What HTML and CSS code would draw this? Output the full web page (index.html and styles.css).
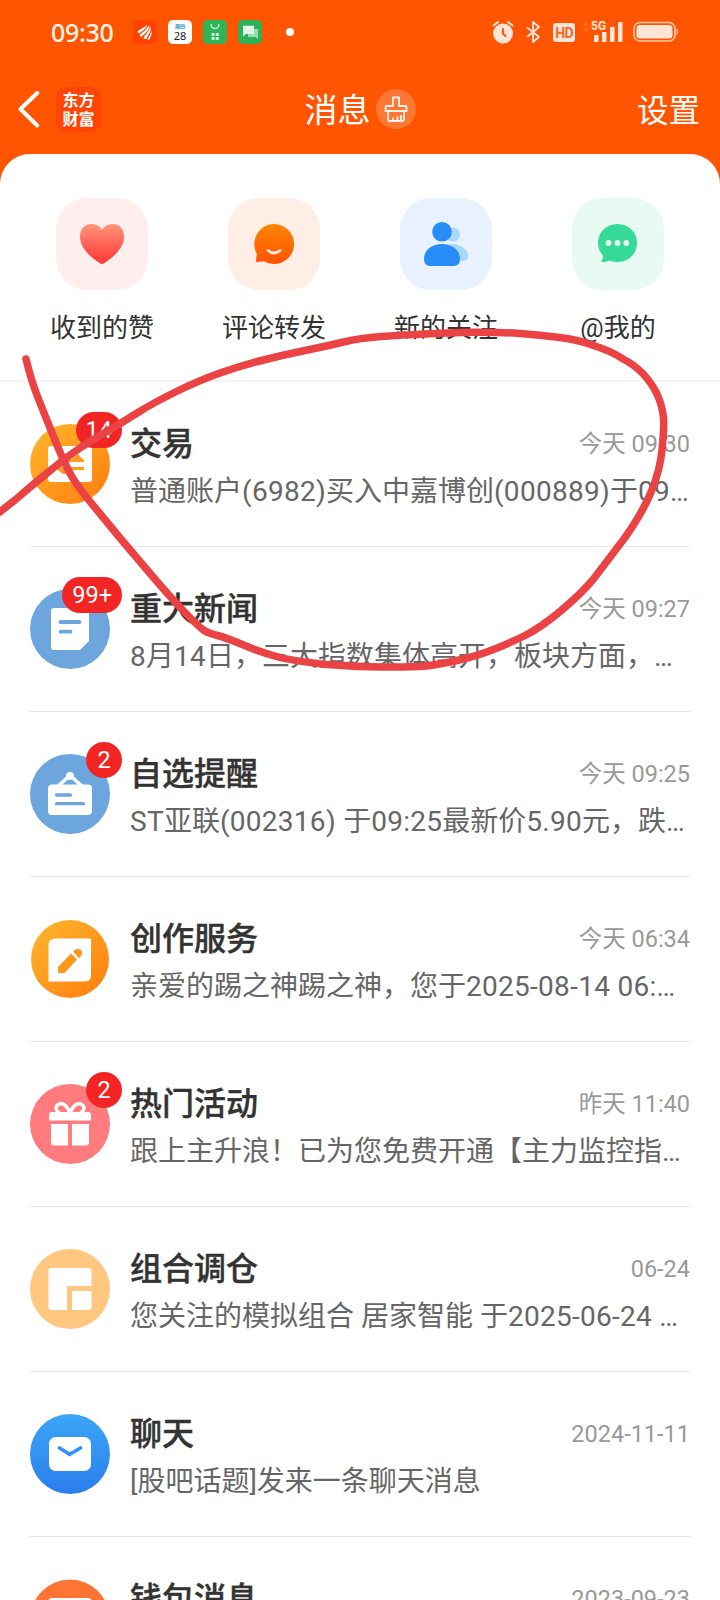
FILE: index.html
```html
<!DOCTYPE html>
<html lang="zh-CN">
<head>
<meta charset="utf-8">
<title>消息</title>
<link rel="stylesheet" href="styles.css">
</head>
<body>
<div class="screen">
  <header class="header">
    <div class="status">
      <span class="clock">09:30</span>
      <div class="status-apps">
        <svg class="app" viewBox="0 0 24 24"><rect width="24" height="24" rx="5" fill="#ff4200"/><path d="M4.500 12C7 8 11.500 8.500 14 4.500C14 9 9.500 10.500 6 13.500ZM6.500 15.500C9 11.500 14 11 15.500 5C17.500 10.500 11.500 13 8.500 17ZM10.500 18.500C11 14.500 16.500 13 16.800 6C19.500 12 14.500 14 13.500 19ZM14.800 20C14.500 17 18 15.500 18.200 10.500C20 14.500 17 16.500 16.800 19Z" fill="#fff"/></svg>
        <span class="app app-calendar"><small>周四</small><b>28</b></span>
        <svg class="app" viewBox="0 0 24 24"><rect width="24" height="24" rx="5" fill="#2db558"/><path d="M8 4c0 6 8 6 8 0" fill="none" stroke="#d9f7de" stroke-width="1.300"/><g fill="#c8efcf"><rect x="8.500" y="13" width="3.200" height="3" rx=".8"/><rect x="12.700" y="13" width="3.200" height="3" rx=".8"/><rect x="8.500" y="17" width="3.200" height="3" rx=".8"/><rect x="12.700" y="17" width="3.200" height="3" rx=".8"/></g></svg>
        <svg class="app" viewBox="0 0 24 24"><rect width="24" height="24" rx="5" fill="#2eb257"/><path d="M10 9h10v10l-2.500-2H10z" fill="#9bddb0"/><path d="M5 5.800h11V14H8l-3 2.500z" fill="#e2f6e7"/></svg>
      </div>
      <i class="status-dot"></i>
      <div class="status-right">
        <svg width="22" height="24" viewBox="0 0 22 24"><circle cx="11" cy="13.500" r="10" fill="#ffe4d8"/><path d="M1.500 5.500 6 2M20.500 5.500 16 2" stroke="#ffe4d8" stroke-width="2" stroke-linecap="round"/><path d="M11 9v5l2.500 2" fill="none" stroke="#ff5a08" stroke-width="2.200" stroke-linecap="round"/></svg>
        <svg width="16" height="24" viewBox="0 0 16 24"><path d="M2 7.500 14 17l-6 5V2l6 5L2 17" fill="none" stroke="#ffe4d8" stroke-width="1.900" stroke-linejoin="round"/></svg>
        <span class="hd">HD</span>
        <span class="signal">
          <svg width="40" height="24" viewBox="0 0 40 24"><path d="M0 5.500 3 2l3 3.500zM0 8.500 3 12l3-3.500z" fill="#ff7430"/><path d="M11 15h4.500v7H11zM19 12h4.500v10H19zM27 7h4.500v15H27zM35 2h4.500v20H35z" fill="#ffe4d8"/></svg>
          <em>5G</em>
        </span>
        <svg width="46" height="22" viewBox="0 0 46 22"><rect x="1" y="1.500" width="41" height="18.500" rx="6" fill="none" stroke="#ffc9ae" stroke-width="1.600"/><rect x="3.500" y="4" width="36" height="13.500" rx="3.500" fill="#ffe4d8"/><path d="M43.500 7.500c2 .5 2 6 0 6.500z" fill="#ffc9ae"/></svg>
      </div>
    </div>
    <nav class="nav">
      <div class="nav-left">
        <svg class="back" width="22" height="38" viewBox="0 0 22 38"><path d="M19.200 3 2.500 19l16.700 16.500" fill="none" stroke="#fff" stroke-width="4" stroke-linecap="round" stroke-linejoin="round"/></svg>
        <span class="brand"><span>东方</span><span>财富</span></span>
      </div>
      <div class="nav-title"><span>消息</span>
        <svg width="40" height="40" viewBox="0 0 40 40"><circle cx="20" cy="20" r="20" fill="#ff7733"/><g fill="none" stroke="#fff4ec" stroke-width="1.800" stroke-linejoin="round"><path d="M17 8.500h6V17h6.500q1 0 1 1v4h-21v-4q0-1 1-1H17z"/><path d="M12 22.500V30q0 2 2 2h12q2 0 2-2v-7.500M17 32v-3.500M21.500 32v-5M25 32v-6"/></g></svg>
      </div>
      <span class="nav-action">设置</span>
    </nav>
  </header>

  <main class="sheet">
    <section class="shortcuts">
      <div class="shortcut">
        <div class="tile tile-pink"><svg width="92" height="92" viewBox="0 0 92 92"><defs><linearGradient id="g1" x2="0" y2="1"><stop stop-color="#ff9677"/><stop offset=".85" stop-color="#ff413f"/></linearGradient></defs><path d="M46 32C42 23.500 24 22.500 24 39C24 50 34 58.500 43.500 65Q46 67 48.500 65C58 58.500 68 50 68 39C68 22.500 50 23.500 46 32Z" fill="url(#g1)"/></svg></div>
        <span>收到的赞</span>
      </div>
      <div class="shortcut">
        <div class="tile tile-peach"><svg width="92" height="92" viewBox="0 0 92 92"><defs><linearGradient id="g2" x2="0" y2="1"><stop stop-color="#ff8500"/><stop offset="1" stop-color="#ff5200"/></linearGradient></defs><path d="M46 26a20 20 0 1 1-10 37.300L29.500 64q-2 0-1.500-2l1-6A20 20 0 0 1 46 26Z" fill="url(#g2)"/><path d="M40 52.500q6 5 12 0" fill="none" stroke="#ffe9dd" stroke-width="2.800" stroke-linecap="round"/></svg></div>
        <span>评论转发</span>
      </div>
      <div class="shortcut">
        <div class="tile tile-blue"><svg width="92" height="92" viewBox="0 0 92 92"><g fill="#a9d7ff"><circle cx="53" cy="36.500" r="7"/><path d="M50 46c10-1 18 5 18 12q0 5-6 5H50z"/></g><path d="M24 61c0-20 36-20 36 0q0 7-6 7H30q-6 0-6-7Z" fill="#288df9"/><circle cx="42" cy="33.700" r="9.800" fill="#288df9"/></svg></div>
        <span>新的关注</span>
      </div>
      <div class="shortcut">
        <div class="tile tile-mint"><svg width="92" height="92" viewBox="0 0 92 92"><path d="M45.500 26C57 26 65 34.500 65 45S57 64 45.500 64q-4.500 0-8-1.500Q34 64 30 64q-1.500-.5 0-2 1.500-2 .5-5Q26 52 26 45C26 34.500 34 26 45.500 26Z" fill="#36da98"/><g fill="#eafbf3"><circle cx="36.500" cy="45" r="2.900"/><circle cx="45.500" cy="45" r="2.900"/><circle cx="54.300" cy="45" r="2.900"/></g></svg></div>
        <span>@我的</span>
      </div>
    </section>

    <section class="list">
      <article class="row">
        <div class="avatar"><svg width="80" height="80" viewBox="0 0 80 80"><defs><linearGradient id="g3" x1=".1" y1=".1" x2=".9" y2=".9"><stop stop-color="#ffb22a"/><stop offset="1" stop-color="#ff8210"/></linearGradient></defs><circle cx="40" cy="40" r="40" fill="url(#g3)"/><rect x="18" y="22" width="44" height="36" rx="3" fill="#fff"/><path d="M27 35.500h14L47.500 30 54 36v2H27ZM54 43H26v1.500L33 50h7v-4h14Z" fill="#ff9a1c"/></svg><b class="badge">14</b></div>
        <div class="body"><div class="top"><h2>交易</h2><time>今天 09:30</time></div><p>普通账户<i>(6982)</i>买入中嘉博创<i>(000889)</i>于<i>09</i>…</p></div>
      </article>
      <article class="row">
        <div class="avatar"><svg width="80" height="80" viewBox="0 0 80 80"><circle cx="40" cy="40" r="40" fill="#6ca6dd"/><path d="M24 19h32q3 0 3 3v30l-9 9H24q-3 0-3-3V22q0-3 3-3Z" fill="#fff"/><path d="M30.500 33h19M30.500 42.700h10" stroke="#6ca6dd" stroke-width="3.800" stroke-linecap="round"/></svg><b class="badge">99+</b></div>
        <div class="body"><div class="top"><h2>重大新闻</h2><time>今天 09:27</time></div><p><i>8</i>月<i>14</i>日，三大指数集体高开，板块方面，…</p></div>
      </article>
      <article class="row">
        <div class="avatar"><svg width="80" height="80" viewBox="0 0 80 80"><circle cx="40" cy="40" r="40" fill="#6ca6dd"/><path d="M28 32 40 21.500 52 32" fill="none" stroke="#fff" stroke-width="3.600"/><circle cx="40" cy="22" r="4" fill="#fff"/><rect x="18" y="30.500" width="44" height="30.500" rx="4" fill="#fff"/><path d="M26.500 41h14M26.500 49.700h27" stroke="#6ca6dd" stroke-width="3.300" stroke-linecap="round"/></svg><b class="badge">2</b></div>
        <div class="body"><div class="top"><h2>自选提醒</h2><time>今天 09:25</time></div><p><i>ST</i>亚联<i>(002316) </i>于<i>09:25</i>最新价<i>5.90</i>元，跌…</p></div>
      </article>
      <article class="row">
        <div class="avatar"><svg width="80" height="80" viewBox="0 0 80 80"><circle cx="40" cy="40" r="39" fill="url(#g3)"/><path d="M25 19.500h36V56q0 6.500-6 6.500H18.500V26q0-6.500 6.500-6.500Z" fill="#fff"/><path d="M28 48 41 34.500l6 6L34.500 54H28Z" fill="#ff971b"/><path d="M43 32.500q5-5 8.500-.8 2 3.300-2.500 7.500Z" fill="#ff971b"/></svg></div>
        <div class="body"><div class="top"><h2>创作服务</h2><time>今天 06:34</time></div><p>亲爱的踢之神踢之神，您于<i>2025-08-14 06:</i>…</p></div>
      </article>
      <article class="row">
        <div class="avatar"><svg width="80" height="80" viewBox="0 0 80 80"><circle cx="40" cy="40" r="40" fill="#ff7b7d"/><path d="M39.500 29C37 20 31 18 27.500 21c-3 3-1 6 2 8M40.500 29C43 20 49 18 52.500 21c3 3 1 6-2 8" fill="none" stroke="#fff" stroke-width="3.500"/><path d="M22 28h36q3 0 3 3v5.500H19V31q0-3 3-3ZM21 40h17v21.500H24q-3 0-3-3ZM42 40h17v18.500q0 3-3 3H42Z" fill="#fff"/></svg><b class="badge">2</b></div>
        <div class="body"><div class="top"><h2>热门活动</h2><time>昨天 11:40</time></div><p>跟上主升浪！已为您免费开通【主力监控指…</p></div>
      </article>
      <article class="row">
        <div class="avatar"><svg width="80" height="80" viewBox="0 0 80 80"><circle cx="40" cy="40" r="40" fill="#ffc780"/><path d="M21.500 19h37q3 0 3 3v15H37v24H21.500q-3 0-3-3V22q0-3 3-3ZM42 42h19.500v16q0 3-3 3H42Z" fill="#fff"/></svg></div>
        <div class="body"><div class="top"><h2>组合调仓</h2><time>06-24</time></div><p>您关注的模拟组合 居家智能 于<i>2025-06-24 </i>…</p></div>
      </article>
      <article class="row">
        <div class="avatar"><svg width="80" height="80" viewBox="0 0 80 80"><defs><linearGradient id="g4" x2="0" y2="1"><stop stop-color="#3ba6f8"/><stop offset="1" stop-color="#2b7eec"/></linearGradient></defs><circle cx="40" cy="40" r="40" fill="url(#g4)"/><rect x="19" y="23" width="42" height="34" rx="6.500" fill="#fff"/><path d="m29.500 34 10 6.300 11-6.300" fill="none" stroke="#3592f3" stroke-width="3.600" stroke-linecap="round"/></svg></div>
        <div class="body"><div class="top"><h2>聊天</h2><time>2024-11-11</time></div><p>[股吧话题]发来一条聊天消息</p></div>
      </article>
      <article class="row">
        <div class="avatar"><svg width="80" height="80" viewBox="0 0 80 80"><circle cx="40" cy="40" r="39.500" fill="#ff7433"/><rect x="18" y="19" width="44" height="40" rx="4" fill="#fff"/></svg></div>
        <div class="body"><div class="top"><h2>钱包消息</h2><time>2023-09-23</time></div></div>
      </article>
    </section>
  </main>

  <svg class="ink" width="720" height="1600" viewBox="0 0 720 1600"><path d="M26 359Q31 380 37.500 396.500Q44 413 53.500 436.500Q63 460 69 471.500Q75 483 87.500 498.500L120 538L156.500 581Q173 600 185 612.500Q197 625 204 630.500Q208 633 217.500 635.500Q227 638 243.500 645Q260 652 276.500 656.500Q293 661 326.500 664.500Q360 667 381.500 667Q403 667 420 666.500Q437 665 457 660.500Q477 656 493.500 649.500Q510 643 525 635.500Q540 628 560 611.500Q580 595 593.500 579L625 537.500Q643 512 651.500 491Q660 470 662 450Q664 430 663.700 421Q663 407 657 394Q645 370 623 359Q613 352 596.500 346.500Q580 340 560 337.500Q540 335 520 333.500Q500 332 473.500 332.300Q447 333 425 334Q403 335 381.500 336.500Q360 338 343.500 342Q327 346 305 350.500Q283 355 261.500 360.500Q240 366 220 373Q200 380 176.500 391.500Q153 403 138 412.500Q123 422 105 432.500Q87 443 75 451.500Q63 460 46.500 473.500Q30 487 15 500L-4 515"/></svg>
</div>
</body>
</html>
```

FILE: styles.css
```css
* { box-sizing: border-box; }

body {
  margin: 0;
  font-family: Roboto, "Noto Sans CJK SC", sans-serif;
  color: #333;
  text-spacing-trim: space-all;
}

.screen {
  position: relative;
  width: 720px;
  height: 1600px;
  overflow: hidden;
  background: #ff5500;
}

svg { display: block; flex: none; }

.header { height: 154px; }

.status {
  display: flex;
  align-items: center;
  height: 64px;
  padding: 0 41px 0 51px;
}

.clock {
  width: 82px;
  font: 500 25px/30px "Noto Sans", sans-serif;
  letter-spacing: -0.3px;
  color: #fff4ec;
}

.status-apps { display: flex; gap: 11px; }

.app { width: 24px; height: 24px; }

.app-calendar {
  display: flex;
  flex-direction: column;
  align-items: center;
  border-radius: 5px;
  background: #fff;
}

.app-calendar small { margin-top: 3px; font-size: 5px; line-height: 7px; font-weight: 700; color: #1687c8; }
.app-calendar b { font: 400 11px/11px "Noto Sans", sans-serif; color: #222; }

.status-dot { width: 8px; height: 8px; margin-left: 24px; border-radius: 50%; background: #fff; }

.status-right { display: flex; align-items: center; margin-left: auto; }
.status-right > :nth-child(2) { margin-left: 11px; }

.hd {
  width: 22px;
  height: 19px;
  margin: 1px 0 0 12px;
  border-radius: 3px;
  background: #ffe4d8;
  color: #f06a2a;
  font-size: 14px;
  font-weight: 700;
  line-height: 20px;
  letter-spacing: -0.8px;
  text-align: center;
}

.signal { position: relative; margin: 0 10px 0 8px; }
.signal svg { overflow: visible; }
.signal em {
  position: absolute;
  left: 8px;
  top: 0;
  font: 700 12px/12px Roboto, sans-serif;
  color: #ffe4d8;
  background: #ff5500;
}

.nav {
  display: grid;
  grid-template-columns: 1fr auto 1fr;
  align-items: center;
  height: 90px;
  padding: 0 20px 0 18px;
  color: #fff;
}

.nav-left { display: flex; align-items: center; gap: 16px; }

.brand {
  display: flex;
  flex-direction: column;
  align-items: center;
  width: 45px;
  height: 45px;
  padding-top: 3px;
  border-radius: 10px;
  background: #ff4506;
  font: 700 16px/19px "Noto Sans CJK SC", sans-serif;
}

.brand span { height: 19px; }

.nav-title { display: flex; align-items: center; gap: 5px; margin-left: 2px; font-size: 33px; line-height: 44px; }
.nav-title span { padding-top: 3px; }
.nav-action { justify-self: end; margin-top: -3px; font-size: 31.500px; }

.sheet { height: 1446px; overflow: hidden; border-radius: 30px 30px 0 0; background: #fff; }

.shortcuts {
  display: grid;
  grid-template-columns: repeat(4, 172px);
  justify-content: center;
  height: 228px;
  padding-top: 44px;
  border-bottom: 2px solid #f5f5f5;
}

.shortcut {
  display: flex;
  flex-direction: column;
  align-items: center;
  gap: 19px;
  font-size: 26px;
  line-height: 38px;
}

.tile { width: 92px; height: 92px; border-radius: 31px; }
.tile-pink { background: #ffeeee; }
.tile-peach { background: #ffeee6; }
.tile-blue { background: #e7f2fe; }
.tile-mint { background: #e8faf2; }

.list { padding: 0 30px; }

.row { display: flex; gap: 20px; height: 165px; padding-top: 42px; border-bottom: 1px solid #e6e6e6; }

.avatar { position: relative; width: 80px; height: 80px; flex: none; }

.badge {
  position: absolute;
  top: -12px;
  right: -12px;
  min-width: 36px;
  height: 36px;
  padding: 0 10px;
  border-radius: 18px;
  background: #f22424;
  color: #fff;
  font-size: 23.500px;
  font-weight: 400;
  line-height: 36px;
  text-align: center;
}

.body { flex: 1; min-width: 0; }

.top { display: flex; justify-content: space-between; align-items: center; height: 40px; }

h2 {
  margin: 0;
  font-size: 32px;
  font-weight: 500;
  line-height: 40px;
  -webkit-text-stroke: 0.4px #333;
}

time { font-size: 23.500px; line-height: 40px; color: #999; }

p { margin: 8px 0 0; font-size: 28px; line-height: 40px; color: #666; white-space: nowrap; }
p i { font-style: normal; letter-spacing: 0.28px; }

.ink { position: absolute; left: 0; top: 0; }
.ink path { fill: none; stroke: #eb4344; stroke-width: 7.500; stroke-linecap: round; stroke-linejoin: round; }
```
